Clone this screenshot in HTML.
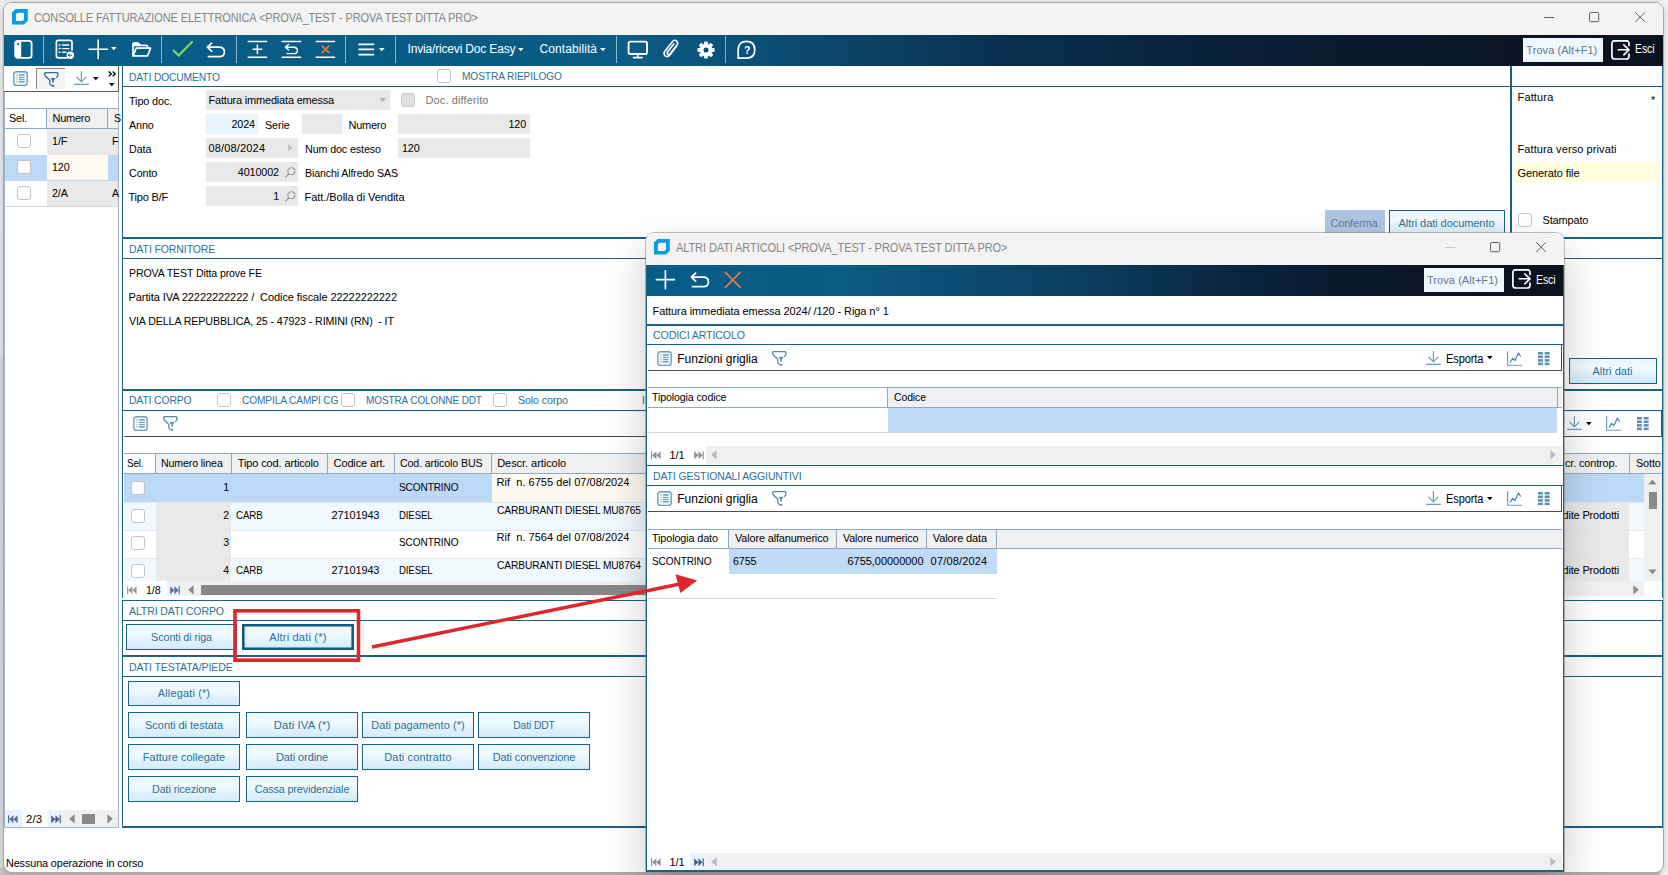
<!DOCTYPE html>
<html lang="it"><head><meta charset="utf-8"><title>Consolle fatturazione elettronica</title>
<style>
html,body{margin:0;padding:0;}
body{width:1668px;height:875px;overflow:hidden;background:#e4e4e4;font-family:'Liberation Sans', sans-serif;}
#root{position:relative;width:1668px;height:875px;overflow:hidden;}
#root div,#root span,#root svg{position:absolute;box-sizing:border-box;}
#root span{white-space:pre;}
</style></head><body><div id="root">
<div style="left:0px;top:0px;width:1668px;height:875px;background:#e9e9e9;"></div>
<div style="left:0px;top:0px;width:5px;height:875px;background:linear-gradient(180deg,#ececec 0,#e8e8e8 40%,#d9d9d9 41%,#dadada 100%);"></div>
<div style="left:0px;top:868px;width:1668px;height:7px;background:#c6c6c6;"></div>
<div style="left:1660px;top:0px;width:8px;height:875px;background:#f2f2f2;"></div>
<div style="left:4px;top:2.5px;width:1659px;height:869.5px;background:#fff;border-radius:8px;box-shadow:0 0 0 1px #a8a8a8,0 2px 6px rgba(0,0,0,.25);overflow:hidden;"></div>
<div style="left:4px;top:2.5px;width:1659px;height:33px;background:#f3f3f3;border-radius:8px 8px 0 0;"></div>
<svg style="left:11.1px;top:8.2px;" width="18" height="18" viewBox="0 0 18 18"><path d="M4.6 1H16.8V12.7L13 16.6H1V4.4Z" fill="#dffbff" stroke="#dffbff" stroke-width="1.6" stroke-linejoin="round"/><path d="M4.6 1H16.8V12.7L13 16.6H1V4.4Z" fill="#0c9ae0"/><path d="M7.4 4.7H13V10.4Q13 12.9 10.5 12.9H4.9V7.2Q4.9 4.7 7.4 4.7Z" fill="#f1f5f7"/></svg>
<span style="left:34px;top:9.50px;font-size:12.4px;line-height:16.4px;letter-spacing:-0.120px;color:#858585;transform:scaleX(0.8885);transform-origin:left center;">CONSOLLE FATTURAZIONE ELETTRONICA &lt;PROVA_TEST - PROVA TEST DITTA PRO&gt;</span>
<svg style="left:1544px;top:12.2px;" width="11" height="11" viewBox="0 0 11 11"><path d="M0 5.5H10.2" stroke="#555" stroke-width="0.95" fill="none"/></svg>
<svg style="left:1589px;top:12.2px;" width="11" height="11" viewBox="0 0 11 11"><rect x="0.5" y="0.5" width="9.2" height="9.2" rx="1.2" stroke="#555" stroke-width="0.95" fill="none"/></svg>
<svg style="left:1635px;top:12.2px;" width="11" height="11" viewBox="0 0 11 11"><path d="M0.3 0.3L10 10M10 0.3L0.3 10" stroke="#555" stroke-width="0.95" fill="none"/></svg>
<div style="left:4px;top:35.3px;width:1659px;height:30.7px;background:linear-gradient(90deg,#085d88 0%,#0a5b85 38%,#0b4a70 48%,#0a3252 59%,#08233d 71%,#0a1a2e 82%,#0b1222 94%,#0c1120 100%);"></div>
<div style="left:43px;top:36px;width:1px;height:27px;background:rgba(255,255,255,.55);"></div>
<div style="left:161px;top:36px;width:1px;height:27px;background:rgba(255,255,255,.55);"></div>
<div style="left:236px;top:36px;width:1px;height:27px;background:rgba(255,255,255,.55);"></div>
<div style="left:345px;top:36px;width:1px;height:27px;background:rgba(255,255,255,.55);"></div>
<div style="left:395px;top:36px;width:1px;height:27px;background:rgba(255,255,255,.55);"></div>
<div style="left:616px;top:36px;width:1px;height:27px;background:rgba(255,255,255,.55);"></div>
<div style="left:725px;top:36px;width:1px;height:27px;background:rgba(255,255,255,.55);"></div>
<svg style="left:14px;top:39px;" width="19" height="21" viewBox="0 0 19 21"><rect x="1.2" y="1.8" width="16.4" height="17" rx="2.6" stroke="#fff" fill="none" stroke-linecap="round" stroke-linejoin="round" stroke-width="1.8"/><path d="M2 3.4Q2 2.4 3 2.4H7.2V18.2H3Q2 18.2 2 17.2Z" fill="#fff"/><circle cx="4.2" cy="5.1" r="1.1" fill="#0a4f76"/></svg>
<svg style="left:55px;top:39px;" width="20" height="21" viewBox="0 0 20 21"><path d="M12 18.8H3.4Q1.4 18.8 1.4 16.8V3.4Q1.4 1.4 3.4 1.4H15Q17 1.4 17 3.4V11" stroke="#fff" fill="none" stroke-linecap="round" stroke-linejoin="round" stroke-width="1.7"/><path d="M7.5 6H13.8M7.5 9.6H13.8M7.5 13.2H11" stroke="#fff" fill="none" stroke-linecap="round" stroke-linejoin="round" stroke-width="1.4"/><path d="M4.3 6H5M4.3 9.6H5M4.3 13.2H5" stroke="#fff" fill="none" stroke-linecap="round" stroke-linejoin="round" stroke-width="1.5"/><circle cx="15.3" cy="16.2" r="3.7" fill="#fff"/><path d="M13.2 16.2H17.2M14.8 14.6L13.2 16.2L14.8 17.8" stroke="#0d5a83" stroke-width="1" fill="none"/></svg>
<svg style="left:88px;top:39px;" width="20" height="21" viewBox="0 0 20 21"><path d="M10.2 1V19.4M1 10.2H19.4" stroke="#fff" fill="none" stroke-linecap="round" stroke-linejoin="round" stroke-width="1.6" stroke-linecap="butt"/></svg>
<svg style="left:110.7px;top:47.3px;" width="6.6" height="5" viewBox="0 0 6.6 5"><path d="M0 0H5.6L2.8 3.1999999999999997Z" fill="#fff"/></svg>
<svg style="left:131px;top:42px;" width="21" height="16" viewBox="0 0 21 16"><path d="M2 3.4V2.4Q2 1.2 3.2 1.2H7L9.2 3.4Z" fill="#fff" stroke="#fff" stroke-width="1.6" stroke-linejoin="round"/><path d="M2 13.6V2.4Q2 1.2 3.2 1.2H7L9.2 3.4H15.4Q16.6 3.4 16.6 4.6V6.2" stroke="#fff" fill="none" stroke-linecap="round" stroke-linejoin="round" stroke-width="1.7"/><path d="M2 13.8L5.2 6.2H19.6L16.6 13.8Z" stroke="#fff" fill="none" stroke-linecap="round" stroke-linejoin="round" stroke-width="1.7"/></svg>
<svg style="left:172px;top:40px;" width="22" height="18" viewBox="0 0 22 18"><path d="M1.6 10.4L6.6 15.6L20 2" stroke="#7ed957" stroke-width="2.2" fill="none" stroke-linecap="round" stroke-linejoin="round"/></svg>
<svg style="left:206px;top:42px;" width="20" height="16" viewBox="0 0 20 16"><path d="M5.6 1.2L1.4 5.2L5.6 9.2M1.8 5.2H13.2Q18.4 5.2 18.4 9.9Q18.4 14.6 13.2 14.6H2.4" stroke="#fff" stroke-width="1.7" fill="none" stroke-linecap="round" stroke-linejoin="round"/></svg>
<svg style="left:247px;top:40px;" width="21" height="19" viewBox="0 0 21 19"><path d="M1.2 1.6H19.6M1.2 17.2H19.6" stroke="#fff" fill="none" stroke-linecap="round" stroke-linejoin="round" stroke-width="1.5"/><path d="M10.4 5V13.6M6.1 9.3H14.7" stroke="#fff" fill="none" stroke-linecap="round" stroke-linejoin="round" stroke-width="1.5"/></svg>
<svg style="left:281px;top:40px;" width="21" height="19" viewBox="0 0 21 19"><path d="M1.2 1.6H19.6M1.2 17.2H19.6" stroke="#fff" fill="none" stroke-linecap="round" stroke-linejoin="round" stroke-width="1.5"/><path d="M7.6 4.4L4.4 7.2L7.6 10M4.8 7.2H12.6Q16.4 7.2 16.4 10.4Q16.4 13.6 12.6 13.6H6" stroke="#fff" fill="none" stroke-linecap="round" stroke-linejoin="round" stroke-width="1.4"/></svg>
<svg style="left:315px;top:40px;" width="21" height="19" viewBox="0 0 21 19"><path d="M1.2 1.6H19.6M1.2 17.2H19.6" stroke="#fff" fill="none" stroke-linecap="round" stroke-linejoin="round" stroke-width="1.5"/><path d="M7.2 6L13.8 12.6M13.8 6L7.2 12.6" stroke="#ec7a33" stroke-width="1.7" fill="none" stroke-linecap="round"/></svg>
<svg style="left:358px;top:42px;" width="17" height="15" viewBox="0 0 17 15"><path d="M1 2.4H15.6M1 7.4H15.6M1 12.6H15.6" stroke="#fff" fill="none" stroke-linecap="round" stroke-linejoin="round" stroke-width="1.6"/></svg>
<svg style="left:378.7px;top:47.8px;" width="6.6" height="5" viewBox="0 0 6.6 5"><path d="M0 0H5.6L2.8 3.1999999999999997Z" fill="#fff"/></svg>
<span style="left:407.5px;top:41.00px;font-size:12px;line-height:16px;letter-spacing:-0.169px;color:#fff;">Invia/ricevi Doc Easy</span>
<svg style="left:517.7px;top:48.3px;" width="6.6" height="5" viewBox="0 0 6.6 5"><path d="M0 0H5.6L2.8 3.1999999999999997Z" fill="#fff"/></svg>
<span style="left:539.5px;top:41.00px;font-size:12px;line-height:16px;letter-spacing:0.080px;color:#fff;">Contabilità</span>
<svg style="left:599.7px;top:48.3px;" width="6.6" height="5" viewBox="0 0 6.6 5"><path d="M0 0H5.6L2.8 3.1999999999999997Z" fill="#fff"/></svg>
<svg style="left:627px;top:40px;" width="22" height="19" viewBox="0 0 22 19"><rect x="1.6" y="1.6" width="18.4" height="12.4" rx="1.6" stroke="#fff" fill="none" stroke-linecap="round" stroke-linejoin="round" stroke-width="1.9"/><path d="M10.8 14.4V17M6.4 17.6H15.2" stroke="#fff" fill="none" stroke-linecap="round" stroke-linejoin="round" stroke-width="1.6"/></svg>
<svg style="left:661px;top:38px;" width="20" height="22" viewBox="0 0 20 22"><path d="M15.6 8.2L8.6 17.2Q6.6 19.6 4.2 17.8Q2 15.8 3.8 13.2L11.6 3.4Q13.4 1.4 15.6 3Q17.6 4.8 16 7L8.8 16Q7.8 17.2 6.6 16.2Q5.6 15.2 6.6 13.8L12.8 6" stroke="#fff" fill="none" stroke-linecap="round" stroke-linejoin="round" stroke-width="1.6"/></svg>
<svg style="left:696.5px;top:40.5px;" width="18" height="18" viewBox="0 0 18 18"><g transform="translate(9 9)"><rect x="-1.9" y="-8.6" width="3.8" height="4" rx="0.8" fill="#fff" transform="rotate(0)"/><rect x="-1.9" y="-8.6" width="3.8" height="4" rx="0.8" fill="#fff" transform="rotate(45)"/><rect x="-1.9" y="-8.6" width="3.8" height="4" rx="0.8" fill="#fff" transform="rotate(90)"/><rect x="-1.9" y="-8.6" width="3.8" height="4" rx="0.8" fill="#fff" transform="rotate(135)"/><rect x="-1.9" y="-8.6" width="3.8" height="4" rx="0.8" fill="#fff" transform="rotate(180)"/><rect x="-1.9" y="-8.6" width="3.8" height="4" rx="0.8" fill="#fff" transform="rotate(225)"/><rect x="-1.9" y="-8.6" width="3.8" height="4" rx="0.8" fill="#fff" transform="rotate(270)"/><rect x="-1.9" y="-8.6" width="3.8" height="4" rx="0.8" fill="#fff" transform="rotate(315)"/><circle r="6.3" fill="#fff"/><circle r="2.5" fill="#0b4c72"/></g></svg>
<svg style="left:736px;top:40px;" width="21" height="20" viewBox="0 0 21 20"><path d="M10.4 1.4Q18.8 1.4 18.8 9.8Q18.8 18.2 10.4 18.2H2.2V9.8Q2.2 1.4 10.4 1.4Z" stroke="#fff" fill="none" stroke-linecap="round" stroke-linejoin="round" stroke-width="1.7"/></svg>
<span style="left:743.5px;top:42.50px;font-size:11px;line-height:15px;letter-spacing:-0.120px;color:#fff;transform:scaleX(0.9650);transform-origin:left center;font-weight:bold;">?</span>
<div style="left:1523px;top:38px;width:80px;height:24px;background:#eef6fe;"></div>
<span style="left:1526.3px;top:42.80px;font-size:11px;line-height:15px;letter-spacing:0.061px;color:#6b7785;">Trova (Alt+F1)</span>
<svg style="left:1611px;top:39.8px;" width="20" height="20" viewBox="0 0 20 20"><path d="M18 5.4V3.6Q18 0.8 15.2 0.8H3.7Q0.9 0.8 0.9 3.6V16.2Q0.9 19 3.7 19H15.2Q18 19 18 16.2V14.2" stroke="#fff" fill="none" stroke-linecap="round" stroke-linejoin="round" stroke-width="1.7"/><path d="M7.2 9.8H17.8M12.8 4.8L18 9.8L12.8 14.8" stroke="#fff" fill="none" stroke-linecap="round" stroke-linejoin="round" stroke-width="1.6"/></svg>
<span style="left:1634.5px;top:41.00px;font-size:12px;line-height:16px;letter-spacing:-0.120px;color:#fff;transform:scaleX(0.8740);transform-origin:left center;">Esci</span>
<div style="left:4px;top:66px;width:115px;height:762px;background:#fff;border:1px solid #a3b5cc;border-top:none;"></div>
<div style="left:4px;top:66px;width:115px;height:26px;background:#fff;border-bottom:1px solid #5a5a5a;border-right:1px solid #5a5a5a;"></div>
<svg style="left:13px;top:71px;" width="15" height="16" viewBox="0 0 15 16"><rect x="0.8" y="0.7" width="13.4" height="13.7" rx="2.7" stroke="#6f9bb5" stroke-width="1.35" fill="#f6fbfe"/><path d="M3.2 4.0H4.8" stroke="#a8c5d7" stroke-width="1.5" fill="none"/><path d="M6 4.0H11.7" stroke="#6f9cb7" stroke-width="1.5" fill="none"/><path d="M3.2 6.5H4.8" stroke="#a8c5d7" stroke-width="1.1" fill="none"/><path d="M6 6.5H11.7" stroke="#6f9cb7" stroke-width="1.1" fill="none"/><path d="M3.2 8.6H4.8" stroke="#a8c5d7" stroke-width="1.1" fill="none"/><path d="M6 8.6H11.7" stroke="#6f9cb7" stroke-width="1.1" fill="none"/><path d="M3.2 10.8H4.8" stroke="#a8c5d7" stroke-width="1.5" fill="none"/><path d="M6 10.8H11.7" stroke="#6f9cb7" stroke-width="1.5" fill="none"/></svg>
<div style="left:36px;top:68px;width:29px;height:21px;background:#f4f4f4;border-top:1px solid #8a8a8a;border-left:1px solid #8a8a8a;"></div>
<svg style="left:44.4px;top:71.9px;" width="16" height="16" viewBox="0 0 16 16"><path d="M12.3 5.5Q14 4.5 14 2.7V1.9Q14 0.6 12.7 0.6H2Q0.7 0.6 0.7 1.9V2.7Q0.7 3.6 1.5 4.3L5.8 8.3V11.6Q5.8 12.3 6.4 12.7L9.4 14.4V13.3" stroke="#2f6e91" stroke-width="1.3" fill="none" stroke-linejoin="round" stroke-linecap="round"/><path d="M7 6.8H11.1M9.05 6.8V10.6" stroke="#2f6e91" stroke-width="1.6" fill="none"/></svg>
<svg style="left:74px;top:71.3px;" width="16" height="15" viewBox="0 0 16 15"><path d="M7.4 0.6V10.6M2.8 6.2L7.4 10.8L12 6.2" stroke="#6f9dba" stroke-width="1.2" fill="none" stroke-linecap="round" stroke-linejoin="round"/><path d="M0.2 13.4H14.8" stroke="#6f9dba" stroke-width="1.3" fill="none"/></svg>
<svg style="left:92.7px;top:76.8px;" width="6.6" height="5" viewBox="0 0 6.6 5"><path d="M0 0H5.6L2.8 3.1999999999999997Z" fill="#000"/></svg>
<svg style="left:108px;top:70.5px;" width="9" height="6" viewBox="0 0 9 6"><path d="M0.7 0.6L3.3 2.9L0.7 5.2M4.6 0.6L7.2 2.9L4.6 5.2" stroke="#000" stroke-width="1.3" fill="none"/></svg>
<svg style="left:108.7px;top:82.8px;" width="6.6" height="5" viewBox="0 0 6.6 5"><path d="M0 0H5.6L2.8 3.1999999999999997Z" fill="#000"/></svg>
<div style="left:5px;top:108px;width:113px;height:21px;background:#f0f0f0;border-top:1px solid #8fa9c4;border-bottom:1px solid #8fa9c4;"></div>
<div style="left:5px;top:109px;width:41px;height:19px;background:#fff;"></div>
<div style="left:46px;top:108px;width:1px;height:21px;background:#8fa9c4;"></div>
<div style="left:107px;top:108px;width:1px;height:21px;background:#8fa9c4;"></div>
<span style="left:9px;top:111.00px;font-size:11px;line-height:15px;letter-spacing:-0.120px;color:#000;transform:scaleX(0.9837);transform-origin:left center;">Sel.</span>
<span style="left:52.5px;top:111.00px;font-size:11px;line-height:15px;letter-spacing:-0.274px;color:#000;">Numero</span>
<span style="left:113.5px;top:111.00px;font-size:11px;line-height:15px;letter-spacing:-0.120px;color:#000;transform:scaleX(0.9650);transform-origin:left center;">S</span>
<div style="left:47px;top:129px;width:71px;height:26px;background:#e9e9e9;"></div>
<div style="left:16.5px;top:134.0px;width:14px;height:14px;background:#fff;border:1px solid #c4c4c4;border-radius:3px;"></div>
<span style="left:51.5px;top:134.00px;font-size:11px;line-height:15px;letter-spacing:-0.120px;color:#000;transform:scaleX(0.9798);transform-origin:left center;">1/F</span>
<span style="left:112px;top:134.00px;font-size:11px;line-height:15px;letter-spacing:-0.120px;color:#000;transform:scaleX(0.9650);transform-origin:left center;">F</span>
<div style="left:5px;top:154.5px;width:113px;height:26px;background:#bcd9f7;"></div>
<div style="left:47px;top:154.5px;width:61px;height:25.5px;background:#fffaf0;"></div>
<div style="left:16.5px;top:159.5px;width:14px;height:14px;background:#fff;border:1px solid #c4c4c4;border-radius:3px;"></div>
<span style="left:51.5px;top:159.50px;font-size:11px;line-height:15px;letter-spacing:-0.120px;color:#000;transform:scaleX(0.9778);transform-origin:left center;">120</span>
<div style="left:47px;top:180.5px;width:71px;height:26px;background:#e9e9e9;"></div>
<div style="left:16.5px;top:185.5px;width:14px;height:14px;background:#fff;border:1px solid #c4c4c4;border-radius:3px;"></div>
<span style="left:51.5px;top:185.50px;font-size:11px;line-height:15px;letter-spacing:-0.120px;color:#000;transform:scaleX(0.9792);transform-origin:left center;">2/A</span>
<span style="left:112px;top:185.50px;font-size:11px;line-height:15px;letter-spacing:-0.120px;color:#000;transform:scaleX(0.9650);transform-origin:left center;">A</span>
<div style="left:5px;top:206px;width:113px;height:1px;background:#d9d9d9;"></div>
<div style="left:5px;top:810px;width:17px;height:17px;background:#eaf3fb;"></div>
<div style="left:48px;top:810px;width:15px;height:17px;background:#eaf3fb;"></div>
<div style="left:63px;top:810px;width:55px;height:17px;background:#f0f0f0;"></div>
<svg style="left:8px;top:815px;" width="10" height="9" viewBox="0 0 10 9"><path d="M0.6 0.3V8.3" stroke="#5a6f94" stroke-width="1.2"/><path d="M5.4 0.3V8.3L1.2 4.3ZM9.6 0.3V8.3L5.4 4.3Z" fill="#5a6f94"/></svg>
<span style="left:25.5px;top:811.50px;font-size:11px;line-height:15px;letter-spacing:0.120px;color:#000;transform:scaleX(1.0298);transform-origin:left center;">2/3</span>
<svg style="left:51px;top:815px;" width="10" height="9" viewBox="0 0 10 9"><path d="M9.2 0.3V8.3" stroke="#4a5f86" stroke-width="1.2"/><path d="M4.4 0.3V8.3L8.6 4.3ZM0.2 0.3V8.3L4.4 4.3Z" fill="#4a5f86"/></svg>
<svg style="left:69px;top:814px;" width="6" height="10" viewBox="0 0 6 10"><path d="M5.6 0.2V9.4L0.2 4.8Z" fill="#8a8a8a"/></svg>
<div style="left:82px;top:814px;width:13px;height:10px;background:#8a8a8a;"></div>
<svg style="left:107px;top:814px;" width="6" height="10" viewBox="0 0 6 10"><path d="M0.4 0.2V9.4L5.8 4.8Z" fill="#8a8a8a"/></svg>
<div style="left:122px;top:66px;width:1.4px;height:762px;background:#1d6183;"></div>
<div style="left:1661.6px;top:66px;width:1.2px;height:762px;background:#1d6183;"></div>
<span style="left:128.5px;top:69.70px;font-size:11px;line-height:15px;letter-spacing:-0.120px;color:#2d7097;transform:scaleX(0.9318);transform-origin:left center;">DATI DOCUMENTO</span>
<div style="left:122px;top:85.7px;width:1541px;height:1px;background:#1d6183;"></div>
<div style="left:437.0px;top:69.0px;width:14px;height:14px;background:#fff;border:1px solid #c4c4c4;border-radius:3px;"></div>
<span style="left:461.5px;top:68.50px;font-size:11px;line-height:15px;letter-spacing:-0.120px;color:#2d7097;transform:scaleX(0.9239);transform-origin:left center;">MOSTRA RIEPILOGO</span>
<div style="left:1510px;top:66px;width:2px;height:172px;background:#1d6183;"></div>
<span style="left:128.5px;top:93.70px;font-size:11px;line-height:15px;letter-spacing:-0.120px;color:#000;transform:scaleX(0.9861);transform-origin:left center;">Tipo doc.</span>
<span style="left:128.5px;top:117.50px;font-size:11px;line-height:15px;letter-spacing:-0.120px;color:#000;transform:scaleX(0.9787);transform-origin:left center;">Anno</span>
<span style="left:128.5px;top:141.50px;font-size:11px;line-height:15px;letter-spacing:-0.120px;color:#000;transform:scaleX(0.9802);transform-origin:left center;">Data</span>
<span style="left:128.5px;top:165.50px;font-size:11px;line-height:15px;letter-spacing:-0.120px;color:#000;transform:scaleX(0.9810);transform-origin:left center;">Conto</span>
<span style="left:128.5px;top:189.50px;font-size:11px;line-height:15px;letter-spacing:-0.206px;color:#000;">Tipo B/F</span>
<div style="left:206px;top:90px;width:184px;height:20px;background:#e8e8e8;"></div>
<span style="left:208.5px;top:92.70px;font-size:11px;line-height:15px;letter-spacing:-0.196px;color:#000;">Fattura immediata emessa</span>
<svg style="left:378.7px;top:97.8px;" width="8" height="5" viewBox="0 0 8 5"><path d="M0 0H7L3.5 3.9Z" fill="#b9b9b9"/></svg>
<div style="left:401.0px;top:93.0px;width:14px;height:14px;background:#e1e1e1;border:1px solid #c6c6c6;border-radius:3px;"></div>
<span style="left:425.5px;top:92.50px;font-size:11px;line-height:15px;letter-spacing:0.111px;color:#777;">Doc. differito</span>
<div style="left:206px;top:114px;width:52px;height:20px;background:#e9f3fb;"></div>
<span style="right:1412.62px;top:116.50px;font-size:11px;line-height:15px;letter-spacing:-0.120px;color:#000;transform:scaleX(0.9794);transform-origin:right center;">2024</span>
<span style="left:264.5px;top:117.50px;font-size:11px;line-height:15px;letter-spacing:-0.120px;color:#000;transform:scaleX(0.9834);transform-origin:left center;">Serie</span>
<div style="left:302px;top:114px;width:40px;height:20px;background:#e8e8e8;"></div>
<span style="left:348.5px;top:117.50px;font-size:11px;line-height:15px;letter-spacing:-0.274px;color:#000;">Numero</span>
<div style="left:398px;top:114px;width:132px;height:20px;background:#e8e8e8;"></div>
<span style="right:1141.62px;top:116.50px;font-size:11px;line-height:15px;letter-spacing:-0.120px;color:#000;transform:scaleX(0.9778);transform-origin:right center;">120</span>
<div style="left:206px;top:138px;width:92px;height:20px;background:#e8e8e8;"></div>
<span style="left:208.5px;top:140.50px;font-size:11px;line-height:15px;letter-spacing:0.160px;color:#000;">08/08/2024</span>
<svg style="left:288px;top:144px;" width="5" height="8" viewBox="0 0 5 8"><path d="M0.3 0.3V7.3L4.3 3.8Z" fill="#b9b9b9"/></svg>
<span style="left:304.5px;top:141.50px;font-size:11px;line-height:15px;letter-spacing:-0.120px;color:#000;transform:scaleX(0.9753);transform-origin:left center;">Num doc esteso</span>
<div style="left:398px;top:138px;width:132px;height:20px;background:#e8e8e8;"></div>
<span style="left:402px;top:140.50px;font-size:11px;line-height:15px;letter-spacing:-0.120px;color:#000;transform:scaleX(0.9778);transform-origin:left center;">120</span>
<div style="left:206px;top:162px;width:92px;height:20px;background:#e8e8e8;"></div>
<span style="right:1389.12px;top:164.50px;font-size:11px;line-height:15px;letter-spacing:-0.120px;color:#000;transform:scaleX(0.9815);transform-origin:right center;">4010002</span>
<svg style="left:285px;top:166.5px;" width="11" height="11" viewBox="0 0 11 11"><circle cx="6.4" cy="4.2" r="3.5" stroke="#9a9a9a" stroke-width="1.1" fill="none"/><path d="M3.9 6.8L0.6 10.2" stroke="#9a9a9a" stroke-width="1.3"/></svg>
<span style="left:304.5px;top:165.50px;font-size:11px;line-height:15px;letter-spacing:-0.120px;color:#000;transform:scaleX(0.9658);transform-origin:left center;">Bianchi Alfredo SAS</span>
<div style="left:206px;top:186px;width:92px;height:20px;background:#e8e8e8;"></div>
<span style="right:1389.12px;top:188.50px;font-size:11px;line-height:15px;letter-spacing:-0.120px;color:#000;transform:scaleX(0.9650);transform-origin:right center;">1</span>
<svg style="left:285px;top:190.5px;" width="11" height="11" viewBox="0 0 11 11"><circle cx="6.4" cy="4.2" r="3.5" stroke="#9a9a9a" stroke-width="1.1" fill="none"/><path d="M3.9 6.8L0.6 10.2" stroke="#9a9a9a" stroke-width="1.3"/></svg>
<span style="left:304.5px;top:189.50px;font-size:11px;line-height:15px;letter-spacing:-0.043px;color:#000;">Fatt./Bolla di Vendita</span>
<span style="left:1517.5px;top:89.50px;font-size:11px;line-height:15px;letter-spacing:0.157px;color:#000;">Fattura</span>
<span style="left:1650.5px;top:92.70px;font-size:11px;line-height:15px;letter-spacing:-0.120px;color:#000;transform:scaleX(0.9650);transform-origin:left center;">*</span>
<span style="left:1517.5px;top:141.50px;font-size:11px;line-height:15px;letter-spacing:0.090px;color:#000;">Fattura verso privati</span>
<div style="left:1515px;top:162px;width:144px;height:20px;background:#ffffdf;"></div>
<span style="left:1517.5px;top:165.80px;font-size:11px;line-height:15px;letter-spacing:-0.082px;color:#000;">Generato file</span>
<div style="left:1518.0px;top:212.5px;width:14px;height:14px;background:#fff;border:1px solid #c4c4c4;border-radius:3px;"></div>
<span style="left:1542.5px;top:212.50px;font-size:11px;line-height:15px;letter-spacing:-0.156px;color:#000;">Stampato</span>
<div style="left:1325px;top:210px;width:60px;height:28px;background:#afc6e3;"></div>
<span style="left:1330.5px;top:215.50px;font-size:11px;line-height:15px;letter-spacing:-0.185px;color:#5f7f9f;">Conferma</span>
<div style="left:1389px;top:210px;width:116px;height:28px;background:linear-gradient(180deg,#eaf6fe 0,#f1faff 35%,#dcf0fc 75%,#d2ebfa 100%);border:1px solid #1d6183;"></div>
<span style="left:1398.5px;top:215.50px;font-size:11px;line-height:15px;letter-spacing:-0.064px;color:#2d7097;">Altri dati documento</span>
<div style="left:122px;top:237px;width:1541px;height:2px;background:#1d6183;"></div>
<span style="left:128.5px;top:242.00px;font-size:11px;line-height:15px;letter-spacing:-0.120px;color:#2d7097;transform:scaleX(0.9555);transform-origin:left center;">DATI FORNITORE</span>
<div style="left:122px;top:258.2px;width:1541px;height:1px;background:#1d6183;"></div>
<span style="left:128.5px;top:266.00px;font-size:11px;line-height:15px;letter-spacing:-0.120px;color:#000;transform:scaleX(0.9614);transform-origin:left center;">PROVA TEST Ditta prove FE</span>
<span style="left:128.5px;top:289.50px;font-size:11px;line-height:15px;letter-spacing:-0.078px;color:#000;">Partita IVA 22222222222 /  Codice fiscale 22222222222</span>
<span style="left:128.5px;top:313.50px;font-size:11px;line-height:15px;letter-spacing:-0.120px;color:#000;transform:scaleX(0.9720);transform-origin:left center;">VIA DELLA REPUBBLICA, 25 - 47923 - RIMINI (RN)  - IT</span>
<div style="left:1569px;top:358px;width:88px;height:25.6px;background:linear-gradient(180deg,#eaf6fe 0,#f1faff 35%,#dcf0fc 75%,#d2ebfa 100%);border:1px solid #1d6183;"></div>
<span style="left:1592.5px;top:363.50px;font-size:11px;line-height:15px;letter-spacing:0.028px;color:#2d7097;">Altri dati</span>
<div style="left:122px;top:389px;width:1541px;height:2px;background:#1d6183;"></div>
<span style="left:128.5px;top:393.30px;font-size:11px;line-height:15px;letter-spacing:-0.120px;color:#2d7097;transform:scaleX(0.9405);transform-origin:left center;">DATI CORPO</span>
<div style="left:122px;top:410px;width:1541px;height:1px;background:#1d6183;"></div>
<div style="left:124px;top:411px;width:1538px;height:1px;background:#e6fbff;"></div>
<div style="left:217.0px;top:393.0px;width:14px;height:14px;background:#fff;border:1px solid #c4c4c4;border-radius:3px;"></div>
<span style="left:241.5px;top:393.00px;font-size:11px;line-height:15px;letter-spacing:-0.120px;color:#2d7097;transform:scaleX(0.9229);transform-origin:left center;">COMPILA CAMPI CG</span>
<div style="left:341.0px;top:393.0px;width:14px;height:14px;background:#fff;border:1px solid #c4c4c4;border-radius:3px;"></div>
<span style="left:365.5px;top:393.00px;font-size:11px;line-height:15px;letter-spacing:-0.120px;color:#2d7097;transform:scaleX(0.9095);transform-origin:left center;">MOSTRA COLONNE DDT</span>
<div style="left:493.0px;top:393.0px;width:14px;height:14px;background:#fff;border:1px solid #c4c4c4;border-radius:3px;"></div>
<span style="left:517.5px;top:393.00px;font-size:11px;line-height:15px;letter-spacing:-0.120px;color:#2d7097;transform:scaleX(0.9706);transform-origin:left center;">Solo corpo</span>
<span style="left:642px;top:393.00px;font-size:11px;line-height:15px;letter-spacing:-0.107px;color:#2d7097;transform:scaleX(0.9650);transform-origin:left center;">I</span>
<div style="left:124px;top:411px;width:1538px;height:26px;border-bottom:1px solid #4d4d4d;border-right:1px solid #4d4d4d;"></div>
<svg style="left:133px;top:416px;" width="15" height="16" viewBox="0 0 15 16"><rect x="0.8" y="0.7" width="13.4" height="13.7" rx="2.7" stroke="#6f9bb5" stroke-width="1.35" fill="#f6fbfe"/><path d="M3.2 4.0H4.8" stroke="#a8c5d7" stroke-width="1.5" fill="none"/><path d="M6 4.0H11.7" stroke="#6f9cb7" stroke-width="1.5" fill="none"/><path d="M3.2 6.5H4.8" stroke="#a8c5d7" stroke-width="1.1" fill="none"/><path d="M6 6.5H11.7" stroke="#6f9cb7" stroke-width="1.1" fill="none"/><path d="M3.2 8.6H4.8" stroke="#a8c5d7" stroke-width="1.1" fill="none"/><path d="M6 8.6H11.7" stroke="#6f9cb7" stroke-width="1.1" fill="none"/><path d="M3.2 10.8H4.8" stroke="#a8c5d7" stroke-width="1.5" fill="none"/><path d="M6 10.8H11.7" stroke="#6f9cb7" stroke-width="1.5" fill="none"/></svg>
<svg style="left:163px;top:416px;" width="16" height="16" viewBox="0 0 16 16"><path d="M12.3 5.5Q14 4.5 14 2.7V1.9Q14 0.6 12.7 0.6H2Q0.7 0.6 0.7 1.9V2.7Q0.7 3.6 1.5 4.3L5.8 8.3V11.6Q5.8 12.3 6.4 12.7L9.4 14.4V13.3" stroke="#5a88a4" stroke-width="1.3" fill="none" stroke-linejoin="round" stroke-linecap="round"/><path d="M7 6.8H11.1M9.05 6.8V10.6" stroke="#5a88a4" stroke-width="1.6" fill="none"/></svg>
<svg style="left:1567px;top:416px;" width="16" height="15" viewBox="0 0 16 15"><path d="M7.4 0.6V10.6M2.8 6.2L7.4 10.8L12 6.2" stroke="#6f9dba" stroke-width="1.2" fill="none" stroke-linecap="round" stroke-linejoin="round"/><path d="M0.2 13.4H14.8" stroke="#6f9dba" stroke-width="1.3" fill="none"/></svg>
<svg style="left:1585.7px;top:421.8px;" width="6.6" height="5" viewBox="0 0 6.6 5"><path d="M0 0H5.6L2.8 3.1999999999999997Z" fill="#000"/></svg>
<svg style="left:1606px;top:416px;" width="16" height="16" viewBox="0 0 16 16"><path d="M0.6 0.2V14.2H15" stroke="#6f9dba" stroke-width="1.15" fill="none"/><path d="M3.2 11.2L5.6 7.2L8 9.6L11.4 2L13.4 5.2" stroke="#4f86a6" stroke-width="1.25" fill="none" stroke-linejoin="round" stroke-linecap="round"/></svg>
<svg style="left:1637px;top:417px;" width="12" height="14" viewBox="0 0 12 14"><rect x="0.0" y="0.0" width="4.9" height="2.5" fill="#5b8fad"/><rect x="6.7" y="0.0" width="4.9" height="2.5" fill="#5b8fad"/><rect x="0.0" y="3.55" width="4.9" height="2.5" fill="#5b8fad"/><rect x="6.7" y="3.55" width="4.9" height="2.5" fill="#5b8fad"/><rect x="0.0" y="7.1" width="4.9" height="2.5" fill="#5b8fad"/><rect x="6.7" y="7.1" width="4.9" height="2.5" fill="#5b8fad"/><rect x="0.0" y="10.649999999999999" width="4.9" height="2.5" fill="#5b8fad"/><rect x="6.7" y="10.649999999999999" width="4.9" height="2.5" fill="#5b8fad"/></svg>
<div style="left:124px;top:453px;width:1538px;height:21px;background:#f0f0f0;border-top:1px solid #8fa9c4;border-bottom:1px solid #8fa9c4;"></div>
<div style="left:124px;top:454px;width:31px;height:19px;background:#fff;"></div>
<div style="left:155px;top:453px;width:1px;height:21px;background:#8fa9c4;"></div>
<div style="left:231px;top:453px;width:1px;height:21px;background:#8fa9c4;"></div>
<div style="left:327px;top:453px;width:1px;height:21px;background:#8fa9c4;"></div>
<div style="left:394px;top:453px;width:1px;height:21px;background:#8fa9c4;"></div>
<div style="left:491px;top:453px;width:1px;height:21px;background:#8fa9c4;"></div>
<div style="left:1629px;top:453px;width:1px;height:21px;background:#8fa9c4;"></div>
<span style="left:127.4px;top:456.00px;font-size:11px;line-height:15px;letter-spacing:-0.120px;color:#000;transform:scaleX(0.8921);transform-origin:left center;">Sel.</span>
<span style="left:161px;top:456.00px;font-size:11px;line-height:15px;letter-spacing:-0.120px;color:#000;transform:scaleX(0.9641);transform-origin:left center;">Numero linea</span>
<span style="left:237.8px;top:456.00px;font-size:11px;line-height:15px;letter-spacing:-0.127px;color:#000;">Tipo cod. articolo</span>
<span style="left:333.6px;top:456.00px;font-size:11px;line-height:15px;letter-spacing:-0.140px;color:#000;">Codice art.</span>
<span style="left:400.4px;top:456.00px;font-size:11px;line-height:15px;letter-spacing:-0.120px;color:#000;transform:scaleX(0.9659);transform-origin:left center;">Cod. articolo BUS</span>
<span style="left:497.2px;top:456.00px;font-size:11px;line-height:15px;letter-spacing:-0.050px;color:#000;">Descr. articolo</span>
<span style="left:1635.5px;top:456.00px;font-size:11px;line-height:15px;letter-spacing:-0.120px;color:#000;transform:scaleX(0.9834);transform-origin:left center;">Sotto</span>
<span style="left:1562px;top:456.00px;font-size:11px;line-height:15px;letter-spacing:-0.120px;color:#000;transform:scaleX(0.9898);transform-origin:left center;"> cr. controp.</span>
<div style="left:124px;top:474px;width:1520px;height:28px;background:#bcd9f7;"></div>
<div style="left:492px;top:474px;width:1071px;height:28px;background:#fef9ef;"></div>
<div style="left:131.0px;top:480.5px;width:14px;height:14px;background:#fff;border:1px solid #c4c4c4;border-radius:3px;"></div>
<span style="right:1439.12px;top:479.90px;font-size:11px;line-height:15px;letter-spacing:-0.120px;color:#000;transform:scaleX(0.9650);transform-origin:right center;">1</span>
<span style="left:398.5px;top:479.80px;font-size:11px;line-height:15px;letter-spacing:-0.120px;color:#000;transform:scaleX(0.9148);transform-origin:left center;">SCONTRINO</span>
<span style="left:496.5px;top:474.70px;font-size:11px;line-height:15px;letter-spacing:0.034px;color:#000;">Rif  n. 6755 del 07/08/2024</span>
<div style="left:124px;top:502px;width:1520px;height:27.5px;background:#f1f8fe;"></div>
<div style="left:156px;top:502px;width:75px;height:27.5px;background:#e9e9e9;"></div>
<div style="left:1563px;top:502px;width:66px;height:27.5px;background:#e9e9e9;"></div>
<div style="left:124px;top:502px;width:1520px;height:1px;background:#dfe6ee;"></div>
<div style="left:131.0px;top:508.5px;width:14px;height:14px;background:#fff;border:1px solid #c4c4c4;border-radius:3px;"></div>
<span style="right:1439.12px;top:507.90px;font-size:11px;line-height:15px;letter-spacing:-0.120px;color:#000;transform:scaleX(0.9650);transform-origin:right center;">2</span>
<span style="left:235.5px;top:507.90px;font-size:11px;line-height:15px;letter-spacing:-0.120px;color:#000;transform:scaleX(0.8840);transform-origin:left center;">CARB</span>
<span style="left:331.5px;top:507.90px;font-size:11px;line-height:15px;letter-spacing:-0.136px;color:#000;">27101943</span>
<span style="left:398.5px;top:507.80px;font-size:11px;line-height:15px;letter-spacing:-0.120px;color:#000;transform:scaleX(0.8692);transform-origin:left center;">DIESEL</span>
<span style="left:496.5px;top:502.70px;font-size:11px;line-height:15px;letter-spacing:-0.120px;color:#000;transform:scaleX(0.9281);transform-origin:left center;">CARBURANTI DIESEL MU8765</span>
<span style="left:1562.5px;top:507.90px;font-size:11px;line-height:15px;letter-spacing:-0.171px;color:#000;">dite Prodotti</span>
<div style="left:156px;top:529.5px;width:75px;height:28px;background:#e9e9e9;"></div>
<div style="left:1563px;top:529.5px;width:66px;height:28px;background:#e9e9e9;"></div>
<div style="left:124px;top:529.5px;width:1520px;height:1px;background:#dfe6ee;"></div>
<div style="left:131.0px;top:536.0px;width:14px;height:14px;background:#fff;border:1px solid #c4c4c4;border-radius:3px;"></div>
<span style="right:1439.12px;top:535.40px;font-size:11px;line-height:15px;letter-spacing:-0.120px;color:#000;transform:scaleX(0.9650);transform-origin:right center;">3</span>
<span style="left:398.5px;top:535.30px;font-size:11px;line-height:15px;letter-spacing:-0.120px;color:#000;transform:scaleX(0.9148);transform-origin:left center;">SCONTRINO</span>
<span style="left:496.5px;top:530.20px;font-size:11px;line-height:15px;letter-spacing:0.034px;color:#000;">Rif  n. 7564 del 07/08/2024</span>
<div style="left:124px;top:557.5px;width:1520px;height:24px;background:#f1f8fe;"></div>
<div style="left:156px;top:557.5px;width:75px;height:24px;background:#e9e9e9;"></div>
<div style="left:1563px;top:557.5px;width:66px;height:24px;background:#e9e9e9;"></div>
<div style="left:124px;top:557.5px;width:1520px;height:1px;background:#dfe6ee;"></div>
<div style="left:131.0px;top:564.0px;width:14px;height:14px;background:#fff;border:1px solid #c4c4c4;border-radius:3px;"></div>
<span style="right:1439.12px;top:563.40px;font-size:11px;line-height:15px;letter-spacing:-0.120px;color:#000;transform:scaleX(0.9650);transform-origin:right center;">4</span>
<span style="left:235.5px;top:563.40px;font-size:11px;line-height:15px;letter-spacing:-0.120px;color:#000;transform:scaleX(0.8840);transform-origin:left center;">CARB</span>
<span style="left:331.5px;top:563.40px;font-size:11px;line-height:15px;letter-spacing:-0.136px;color:#000;">27101943</span>
<span style="left:398.5px;top:563.30px;font-size:11px;line-height:15px;letter-spacing:-0.120px;color:#000;transform:scaleX(0.8692);transform-origin:left center;">DIESEL</span>
<span style="left:496.5px;top:558.20px;font-size:11px;line-height:15px;letter-spacing:-0.120px;color:#000;transform:scaleX(0.9281);transform-origin:left center;">CARBURANTI DIESEL MU8764</span>
<span style="left:1562.5px;top:563.40px;font-size:11px;line-height:15px;letter-spacing:-0.171px;color:#000;">dite Prodotti</span>
<div style="left:1644px;top:474px;width:18px;height:107px;background:#f0f0f0;"></div>
<svg style="left:1648px;top:479px;" width="9" height="6" viewBox="0 0 9 6"><path d="M0.2 5.4H8.6L4.4 0.4Z" fill="#8a8a8a"/></svg>
<div style="left:1648.5px;top:491.5px;width:8.5px;height:17px;background:#8a8a8a;"></div>
<svg style="left:1648px;top:569px;" width="9" height="6" viewBox="0 0 9 6"><path d="M0.2 0.4H8.6L4.4 5.4Z" fill="#8a8a8a"/></svg>
<div style="left:124px;top:581px;width:1520px;height:15px;background:#f0f0f0;"></div>
<div style="left:124px;top:581px;width:43px;height:15px;background:#fff;"></div>
<div style="left:167px;top:581px;width:15px;height:15px;background:#eaf3fb;"></div>
<div style="left:1644px;top:581px;width:18px;height:15px;background:#fff;"></div>
<svg style="left:127px;top:585.6px;" width="10" height="9" viewBox="0 0 10 9"><path d="M0.6 0.3V8.3" stroke="#9a9a9a" stroke-width="1.2"/><path d="M5.4 0.3V8.3L1.2 4.3ZM9.6 0.3V8.3L5.4 4.3Z" fill="#9a9a9a"/></svg>
<span style="left:145.8px;top:582.50px;font-size:11px;line-height:15px;letter-spacing:-0.120px;color:#000;transform:scaleX(0.9697);transform-origin:left center;">1/8</span>
<svg style="left:170px;top:585.6px;" width="10" height="9" viewBox="0 0 10 9"><path d="M9.2 0.3V8.3" stroke="#5a6f94" stroke-width="1.2"/><path d="M4.4 0.3V8.3L8.6 4.3ZM0.2 0.3V8.3L4.4 4.3Z" fill="#5a6f94"/></svg>
<svg style="left:188px;top:584.6px;" width="6" height="10" viewBox="0 0 6 10"><path d="M5.6 0.2V9.4L0.2 4.8Z" fill="#8a8a8a"/></svg>
<div style="left:201px;top:585.2px;width:1330px;height:9.6px;background:#878787;"></div>
<svg style="left:1633px;top:584.5px;" width="6" height="10" viewBox="0 0 6 10"><path d="M0.4 0.2V9.4L5.8 4.8Z" fill="#8a8a8a"/></svg>
<div style="left:122px;top:600px;width:1541px;height:1.3px;background:#1d6183;"></div>
<span style="left:128.5px;top:603.80px;font-size:11px;line-height:15px;letter-spacing:-0.120px;color:#2d7097;transform:scaleX(0.9572);transform-origin:left center;">ALTRI DATI CORPO</span>
<div style="left:122px;top:619.9px;width:1541px;height:1px;background:#1d6183;"></div>
<div style="left:122px;top:598.2px;width:1541px;height:1.6px;background:#fff;"></div>
<div style="left:126.2px;top:624.2px;width:111.1px;height:25.6px;background:linear-gradient(180deg,#eaf6fe 0,#f1faff 35%,#dcf0fc 75%,#d2ebfa 100%);border:1px solid #1d6183;"></div>
<span style="left:126.2px;width:111.1px;text-align:center;top:629.80px;font-size:11px;line-height:15px;letter-spacing:-0.120px;color:#2d7097;transform:scaleX(0.9833);transform-origin:center center;">Sconti di riga</span>
<div style="left:242.1px;top:624.1px;width:111.9px;height:25.9px;background:linear-gradient(180deg,#eaf6fe 0,#f1faff 35%,#dcf0fc 75%,#d2ebfa 100%);box-shadow:inset 0 0 0 2.6px #0e5a82;"></div>
<span style="left:242.1px;width:111.9px;text-align:center;top:629.85px;font-size:11px;line-height:15px;letter-spacing:0.120px;color:#2d7097;transform:scaleX(1.0185);transform-origin:center center;">Altri dati (*)</span>
<div style="left:122px;top:655px;width:1541px;height:2px;background:#1d6183;"></div>
<span style="left:128.5px;top:659.90px;font-size:11px;line-height:15px;letter-spacing:-0.120px;color:#2d7097;transform:scaleX(0.9585);transform-origin:left center;">DATI TESTATA/PIEDE</span>
<div style="left:122px;top:676px;width:1541px;height:1px;background:#1d6183;"></div>
<div style="left:128px;top:680.5px;width:112px;height:25px;background:linear-gradient(180deg,#eaf6fe 0,#f1faff 35%,#dcf0fc 75%,#d2ebfa 100%);border:1px solid #1d6183;"></div>
<span style="left:128px;width:112px;text-align:center;top:685.80px;font-size:11px;line-height:15px;letter-spacing:0.132px;color:#2d7097;">Allegati (*)</span>
<div style="left:128px;top:712px;width:112px;height:26px;background:linear-gradient(180deg,#eaf6fe 0,#f1faff 35%,#dcf0fc 75%,#d2ebfa 100%);border:1px solid #1d6183;"></div>
<span style="left:128px;width:112px;text-align:center;top:717.80px;font-size:11px;line-height:15px;letter-spacing:-0.018px;color:#2d7097;">Sconti di testata</span>
<div style="left:246px;top:712px;width:112px;height:26px;background:linear-gradient(180deg,#eaf6fe 0,#f1faff 35%,#dcf0fc 75%,#d2ebfa 100%);border:1px solid #1d6183;"></div>
<span style="left:246px;width:112px;text-align:center;top:717.80px;font-size:11px;line-height:15px;letter-spacing:0.120px;color:#2d7097;transform:scaleX(1.0307);transform-origin:center center;">Dati IVA (*)</span>
<div style="left:362px;top:712px;width:112px;height:26px;background:linear-gradient(180deg,#eaf6fe 0,#f1faff 35%,#dcf0fc 75%,#d2ebfa 100%);border:1px solid #1d6183;"></div>
<span style="left:362px;width:112px;text-align:center;top:717.80px;font-size:11px;line-height:15px;letter-spacing:0.063px;color:#2d7097;">Dati pagamento (*)</span>
<div style="left:478px;top:712px;width:112px;height:26px;background:linear-gradient(180deg,#eaf6fe 0,#f1faff 35%,#dcf0fc 75%,#d2ebfa 100%);border:1px solid #1d6183;"></div>
<span style="left:478px;width:112px;text-align:center;top:717.80px;font-size:11px;line-height:15px;letter-spacing:-0.120px;color:#2d7097;transform:scaleX(0.9371);transform-origin:center center;">Dati DDT</span>
<div style="left:128px;top:744px;width:112px;height:26px;background:linear-gradient(180deg,#eaf6fe 0,#f1faff 35%,#dcf0fc 75%,#d2ebfa 100%);border:1px solid #1d6183;"></div>
<span style="left:128px;width:112px;text-align:center;top:749.80px;font-size:11px;line-height:15px;letter-spacing:0.023px;color:#2d7097;">Fatture collegate</span>
<div style="left:246px;top:744px;width:112px;height:26px;background:linear-gradient(180deg,#eaf6fe 0,#f1faff 35%,#dcf0fc 75%,#d2ebfa 100%);border:1px solid #1d6183;"></div>
<span style="left:246px;width:112px;text-align:center;top:749.80px;font-size:11px;line-height:15px;letter-spacing:-0.100px;color:#2d7097;">Dati ordine</span>
<div style="left:362px;top:744px;width:112px;height:26px;background:linear-gradient(180deg,#eaf6fe 0,#f1faff 35%,#dcf0fc 75%,#d2ebfa 100%);border:1px solid #1d6183;"></div>
<span style="left:362px;width:112px;text-align:center;top:749.80px;font-size:11px;line-height:15px;letter-spacing:0.144px;color:#2d7097;">Dati contratto</span>
<div style="left:478px;top:744px;width:112px;height:26px;background:linear-gradient(180deg,#eaf6fe 0,#f1faff 35%,#dcf0fc 75%,#d2ebfa 100%);border:1px solid #1d6183;"></div>
<span style="left:478px;width:112px;text-align:center;top:749.80px;font-size:11px;line-height:15px;letter-spacing:-0.113px;color:#2d7097;">Dati convenzione</span>
<div style="left:128px;top:776px;width:112px;height:26px;background:linear-gradient(180deg,#eaf6fe 0,#f1faff 35%,#dcf0fc 75%,#d2ebfa 100%);border:1px solid #1d6183;"></div>
<span style="left:128px;width:112px;text-align:center;top:781.80px;font-size:11px;line-height:15px;letter-spacing:-0.120px;color:#2d7097;transform:scaleX(0.9849);transform-origin:center center;">Dati ricezione</span>
<div style="left:246px;top:776px;width:112px;height:26px;background:linear-gradient(180deg,#eaf6fe 0,#f1faff 35%,#dcf0fc 75%,#d2ebfa 100%);border:1px solid #1d6183;"></div>
<span style="left:246px;width:112px;text-align:center;top:781.80px;font-size:11px;line-height:15px;letter-spacing:-0.120px;color:#2d7097;transform:scaleX(0.9762);transform-origin:center center;">Cassa previdenziale</span>
<div style="left:122px;top:826.4px;width:1541px;height:1.4px;background:#1d6183;"></div>
<span style="left:6px;top:855.50px;font-size:11px;line-height:15px;letter-spacing:-0.120px;color:#000;transform:scaleX(0.9852);transform-origin:left center;">Nessuna operazione in corso</span>
<svg style="left:230px;top:606px;" width="134" height="60" viewBox="0 0 134 60"><rect x="5" y="4.8" width="123.5" height="49.4" fill="none" stroke="#de262d" stroke-width="3.6"/></svg>
<div style="left:646px;top:233px;width:918px;height:638px;background:#fff;border-radius:8px 8px 0 0;box-shadow:0 18px 40px 0 rgba(0,0,0,.22),0 0 0 1px rgba(140,140,140,.55);"></div>
<div style="left:646px;top:233px;width:918px;height:32px;background:#f3f3f3;border-radius:8px 8px 0 0;"></div>
<svg style="left:653px;top:237.5px;" width="18" height="18" viewBox="0 0 18 18"><path d="M4.6 1H16.8V12.7L13 16.6H1V4.4Z" fill="#dffbff" stroke="#dffbff" stroke-width="1.6" stroke-linejoin="round"/><path d="M4.6 1H16.8V12.7L13 16.6H1V4.4Z" fill="#0c9ae0"/><path d="M7.4 4.7H13V10.4Q13 12.9 10.5 12.9H4.9V7.2Q4.9 4.7 7.4 4.7Z" fill="#f1f5f7"/></svg>
<span style="left:675.9px;top:239.50px;font-size:12.4px;line-height:16.4px;letter-spacing:-0.120px;color:#858585;transform:scaleX(0.8906);transform-origin:left center;">ALTRI DATI ARTICOLI &lt;PROVA_TEST - PROVA TEST DITTA PRO&gt;</span>
<svg style="left:1445px;top:242px;" width="11" height="11" viewBox="0 0 11 11"><path d="M0 5.5H10.2" stroke="#c8c8c8" stroke-width="0.95" fill="none"/></svg>
<svg style="left:1490.3px;top:242px;" width="11" height="11" viewBox="0 0 11 11"><rect x="0.5" y="0.5" width="9.2" height="9.2" rx="1.2" stroke="#555" stroke-width="0.95" fill="none"/></svg>
<svg style="left:1535.8px;top:242px;" width="11" height="11" viewBox="0 0 11 11"><path d="M0.3 0.3L10 10M10 0.3L0.3 10" stroke="#555" stroke-width="0.95" fill="none"/></svg>
<div style="left:646px;top:265px;width:918px;height:30.5px;background:linear-gradient(90deg,#085d88 0%,#0a5b85 22%,#0b5078 30%,#0a3d60 48%,#092b48 60%,#091d33 72%,#0b1525 84%,#0c1120 100%);"></div>
<svg style="left:655px;top:270px;" width="21" height="20" viewBox="0 0 21 20"><path d="M10.4 0.8V18.6M1.4 9.7H19.4" stroke="#fff" fill="none" stroke-linecap="round" stroke-linejoin="round" stroke-width="1.7" stroke-linecap="butt"/></svg>
<svg style="left:689.5px;top:271.5px;" width="20" height="16" viewBox="0 0 20 16"><path d="M5.6 1.2L1.4 5.2L5.6 9.2M1.8 5.2H13.2Q18.4 5.2 18.4 9.9Q18.4 14.6 13.2 14.6H2.4" stroke="#fff" stroke-width="1.7" fill="none" stroke-linecap="round" stroke-linejoin="round"/></svg>
<svg style="left:724px;top:270.5px;" width="18" height="18" viewBox="0 0 18 18"><path d="M1.4 1.4L16.2 16.4M16.2 1.4L1.4 16.4" stroke="#e8803f" stroke-width="1.5" fill="none" stroke-linecap="round"/></svg>
<div style="left:1424px;top:268px;width:80px;height:24px;background:#eef6fe;"></div>
<span style="left:1427px;top:272.80px;font-size:11px;line-height:15px;letter-spacing:0.061px;color:#6b7785;">Trova (Alt+F1)</span>
<svg style="left:1512px;top:269.4px;" width="20" height="20" viewBox="0 0 20 20"><path d="M18 5.4V3.6Q18 0.8 15.2 0.8H3.7Q0.9 0.8 0.9 3.6V16.2Q0.9 19 3.7 19H15.2Q18 19 18 16.2V14.2" stroke="#fff" fill="none" stroke-linecap="round" stroke-linejoin="round" stroke-width="1.7"/><path d="M7.2 9.8H17.8M12.8 4.8L18 9.8L12.8 14.8" stroke="#fff" fill="none" stroke-linecap="round" stroke-linejoin="round" stroke-width="1.6"/></svg>
<span style="left:1535.5px;top:271.50px;font-size:12px;line-height:16px;letter-spacing:-0.120px;color:#fff;transform:scaleX(0.8740);transform-origin:left center;">Esci</span>
<span style="left:652.5px;top:303.50px;font-size:11px;line-height:15px;letter-spacing:-0.090px;color:#000;">Fattura immediata emessa 2024/ /120 - Riga n° 1</span>
<div style="left:646px;top:265px;width:1px;height:606px;background:#1d6183;"></div>
<div style="left:1563px;top:265px;width:1px;height:606px;background:#1d6183;"></div>
<div style="left:647px;top:324px;width:916px;height:1.5px;background:#1d6183;"></div>
<span style="left:652.5px;top:327.50px;font-size:11px;line-height:15px;letter-spacing:-0.120px;color:#2d7097;transform:scaleX(0.9653);transform-origin:left center;">CODICI ARTICOLO</span>
<div style="left:647px;top:344px;width:916px;height:1.3px;background:#1d6183;"></div>
<div style="left:648px;top:345px;width:914px;height:26px;border-bottom:1px solid #4d4d4d;border-right:1px solid #4d4d4d;"></div>
<svg style="left:657px;top:350.5px;" width="15" height="16" viewBox="0 0 15 16"><rect x="0.8" y="0.7" width="13.4" height="13.7" rx="2.7" stroke="#6f9bb5" stroke-width="1.35" fill="#f6fbfe"/><path d="M3.2 4.0H4.8" stroke="#a8c5d7" stroke-width="1.5" fill="none"/><path d="M6 4.0H11.7" stroke="#6f9cb7" stroke-width="1.5" fill="none"/><path d="M3.2 6.5H4.8" stroke="#a8c5d7" stroke-width="1.1" fill="none"/><path d="M6 6.5H11.7" stroke="#6f9cb7" stroke-width="1.1" fill="none"/><path d="M3.2 8.6H4.8" stroke="#a8c5d7" stroke-width="1.1" fill="none"/><path d="M6 8.6H11.7" stroke="#6f9cb7" stroke-width="1.1" fill="none"/><path d="M3.2 10.8H4.8" stroke="#a8c5d7" stroke-width="1.5" fill="none"/><path d="M6 10.8H11.7" stroke="#6f9cb7" stroke-width="1.5" fill="none"/></svg>
<span style="left:677.3px;top:350.50px;font-size:12px;line-height:16px;letter-spacing:-0.021px;color:#000;">Funzioni griglia</span>
<svg style="left:772px;top:350.5px;" width="16" height="16" viewBox="0 0 16 16"><path d="M12.3 5.5Q14 4.5 14 2.7V1.9Q14 0.6 12.7 0.6H2Q0.7 0.6 0.7 1.9V2.7Q0.7 3.6 1.5 4.3L5.8 8.3V11.6Q5.8 12.3 6.4 12.7L9.4 14.4V13.3" stroke="#5a88a4" stroke-width="1.3" fill="none" stroke-linejoin="round" stroke-linecap="round"/><path d="M7 6.8H11.1M9.05 6.8V10.6" stroke="#5a88a4" stroke-width="1.6" fill="none"/></svg>
<svg style="left:1425.5px;top:350.5px;" width="16" height="15" viewBox="0 0 16 15"><path d="M7.4 0.6V10.6M2.8 6.2L7.4 10.8L12 6.2" stroke="#6f9dba" stroke-width="1.2" fill="none" stroke-linecap="round" stroke-linejoin="round"/><path d="M0.2 13.4H14.8" stroke="#6f9dba" stroke-width="1.3" fill="none"/></svg>
<span style="left:1445.7px;top:350.50px;font-size:12px;line-height:16px;letter-spacing:-0.120px;color:#000;transform:scaleX(0.9178);transform-origin:left center;">Esporta</span>
<svg style="left:1486.7px;top:356.3px;" width="6.6" height="5" viewBox="0 0 6.6 5"><path d="M0 0H5.6L2.8 3.1999999999999997Z" fill="#000"/></svg>
<svg style="left:1507px;top:350.5px;" width="16" height="16" viewBox="0 0 16 16"><path d="M0.6 0.2V14.2H15" stroke="#6f9dba" stroke-width="1.15" fill="none"/><path d="M3.2 11.2L5.6 7.2L8 9.6L11.4 2L13.4 5.2" stroke="#4f86a6" stroke-width="1.25" fill="none" stroke-linejoin="round" stroke-linecap="round"/></svg>
<svg style="left:1538.3px;top:351.5px;" width="12" height="14" viewBox="0 0 12 14"><rect x="0.0" y="0.0" width="4.9" height="2.5" fill="#5b8fad"/><rect x="6.7" y="0.0" width="4.9" height="2.5" fill="#5b8fad"/><rect x="0.0" y="3.55" width="4.9" height="2.5" fill="#5b8fad"/><rect x="6.7" y="3.55" width="4.9" height="2.5" fill="#5b8fad"/><rect x="0.0" y="7.1" width="4.9" height="2.5" fill="#5b8fad"/><rect x="6.7" y="7.1" width="4.9" height="2.5" fill="#5b8fad"/><rect x="0.0" y="10.649999999999999" width="4.9" height="2.5" fill="#5b8fad"/><rect x="6.7" y="10.649999999999999" width="4.9" height="2.5" fill="#5b8fad"/></svg>
<div style="left:648px;top:387px;width:914px;height:21px;background:#f0f0f0;border-top:1px solid #8fa9c4;border-bottom:1px solid #8fa9c4;"></div>
<div style="left:648px;top:388px;width:239px;height:19px;background:#fff;"></div>
<div style="left:887px;top:387px;width:1px;height:21px;background:#8fa9c4;"></div>
<div style="left:1557px;top:387px;width:1px;height:21px;background:#8fa9c4;"></div>
<span style="left:651.5px;top:390.00px;font-size:11px;line-height:15px;letter-spacing:-0.120px;color:#000;transform:scaleX(0.9639);transform-origin:left center;">Tipologia codice</span>
<span style="left:893.5px;top:390.00px;font-size:11px;line-height:15px;letter-spacing:-0.120px;color:#000;transform:scaleX(0.9510);transform-origin:left center;">Codice</span>
<div style="left:888px;top:408px;width:669px;height:24px;background:#bfdbf7;"></div>
<div style="left:648px;top:432px;width:909px;height:1px;background:#d6d6d6;"></div>
<div style="left:648px;top:446px;width:914px;height:18px;background:#f0f0f0;"></div>
<div style="left:648px;top:446px;width:58px;height:18px;background:#fff;"></div>
<svg style="left:651px;top:451px;" width="10" height="9" viewBox="0 0 10 9"><path d="M0.6 0.3V8.3" stroke="#8d9199" stroke-width="1.2"/><path d="M5.4 0.3V8.3L1.2 4.3ZM9.6 0.3V8.3L5.4 4.3Z" fill="#8d9199"/></svg>
<span style="left:669.5px;top:448.00px;font-size:11px;line-height:15px;letter-spacing:-0.148px;color:#000;">1/1</span>
<svg style="left:693.5px;top:451px;" width="10" height="9" viewBox="0 0 10 9"><path d="M9.2 0.3V8.3" stroke="#8d9199" stroke-width="1.2"/><path d="M4.4 0.3V8.3L8.6 4.3ZM0.2 0.3V8.3L4.4 4.3Z" fill="#8d9199"/></svg>
<svg style="left:711px;top:450px;" width="6" height="10" viewBox="0 0 6 10"><path d="M5.6 0.2V9.4L0.2 4.8Z" fill="#b5bac4"/></svg>
<svg style="left:1550px;top:450px;" width="6" height="10" viewBox="0 0 6 10"><path d="M0.4 0.2V9.4L5.8 4.8Z" fill="#b5bac4"/></svg>
<div style="left:647px;top:464.5px;width:916px;height:1.5px;background:#1d6183;"></div>
<span style="left:652.5px;top:469.20px;font-size:11px;line-height:15px;letter-spacing:-0.120px;color:#2d7097;transform:scaleX(0.9506);transform-origin:left center;">DATI GESTIONALI AGGIUNTIVI</span>
<div style="left:647px;top:484.5px;width:916px;height:1.3px;background:#1d6183;"></div>
<div style="left:648px;top:485.5px;width:914px;height:26px;border-bottom:1px solid #4d4d4d;border-right:1px solid #4d4d4d;"></div>
<svg style="left:657px;top:491.0px;" width="15" height="16" viewBox="0 0 15 16"><rect x="0.8" y="0.7" width="13.4" height="13.7" rx="2.7" stroke="#6f9bb5" stroke-width="1.35" fill="#f6fbfe"/><path d="M3.2 4.0H4.8" stroke="#a8c5d7" stroke-width="1.5" fill="none"/><path d="M6 4.0H11.7" stroke="#6f9cb7" stroke-width="1.5" fill="none"/><path d="M3.2 6.5H4.8" stroke="#a8c5d7" stroke-width="1.1" fill="none"/><path d="M6 6.5H11.7" stroke="#6f9cb7" stroke-width="1.1" fill="none"/><path d="M3.2 8.6H4.8" stroke="#a8c5d7" stroke-width="1.1" fill="none"/><path d="M6 8.6H11.7" stroke="#6f9cb7" stroke-width="1.1" fill="none"/><path d="M3.2 10.8H4.8" stroke="#a8c5d7" stroke-width="1.5" fill="none"/><path d="M6 10.8H11.7" stroke="#6f9cb7" stroke-width="1.5" fill="none"/></svg>
<span style="left:677.3px;top:491.00px;font-size:12px;line-height:16px;letter-spacing:-0.021px;color:#000;">Funzioni griglia</span>
<svg style="left:772px;top:491.0px;" width="16" height="16" viewBox="0 0 16 16"><path d="M12.3 5.5Q14 4.5 14 2.7V1.9Q14 0.6 12.7 0.6H2Q0.7 0.6 0.7 1.9V2.7Q0.7 3.6 1.5 4.3L5.8 8.3V11.6Q5.8 12.3 6.4 12.7L9.4 14.4V13.3" stroke="#5a88a4" stroke-width="1.3" fill="none" stroke-linejoin="round" stroke-linecap="round"/><path d="M7 6.8H11.1M9.05 6.8V10.6" stroke="#5a88a4" stroke-width="1.6" fill="none"/></svg>
<svg style="left:1425.5px;top:491.0px;" width="16" height="15" viewBox="0 0 16 15"><path d="M7.4 0.6V10.6M2.8 6.2L7.4 10.8L12 6.2" stroke="#6f9dba" stroke-width="1.2" fill="none" stroke-linecap="round" stroke-linejoin="round"/><path d="M0.2 13.4H14.8" stroke="#6f9dba" stroke-width="1.3" fill="none"/></svg>
<span style="left:1445.7px;top:491.00px;font-size:12px;line-height:16px;letter-spacing:-0.120px;color:#000;transform:scaleX(0.9178);transform-origin:left center;">Esporta</span>
<svg style="left:1486.7px;top:496.8px;" width="6.6" height="5" viewBox="0 0 6.6 5"><path d="M0 0H5.6L2.8 3.1999999999999997Z" fill="#000"/></svg>
<svg style="left:1507px;top:491.0px;" width="16" height="16" viewBox="0 0 16 16"><path d="M0.6 0.2V14.2H15" stroke="#6f9dba" stroke-width="1.15" fill="none"/><path d="M3.2 11.2L5.6 7.2L8 9.6L11.4 2L13.4 5.2" stroke="#4f86a6" stroke-width="1.25" fill="none" stroke-linejoin="round" stroke-linecap="round"/></svg>
<svg style="left:1538.3px;top:492.0px;" width="12" height="14" viewBox="0 0 12 14"><rect x="0.0" y="0.0" width="4.9" height="2.5" fill="#5b8fad"/><rect x="6.7" y="0.0" width="4.9" height="2.5" fill="#5b8fad"/><rect x="0.0" y="3.55" width="4.9" height="2.5" fill="#5b8fad"/><rect x="6.7" y="3.55" width="4.9" height="2.5" fill="#5b8fad"/><rect x="0.0" y="7.1" width="4.9" height="2.5" fill="#5b8fad"/><rect x="6.7" y="7.1" width="4.9" height="2.5" fill="#5b8fad"/><rect x="0.0" y="10.649999999999999" width="4.9" height="2.5" fill="#5b8fad"/><rect x="6.7" y="10.649999999999999" width="4.9" height="2.5" fill="#5b8fad"/></svg>
<div style="left:648px;top:528.5px;width:914px;height:20.5px;background:#f0f0f0;border-top:1px solid #8fa9c4;border-bottom:1px solid #8fa9c4;"></div>
<div style="left:648px;top:529.5px;width:80px;height:18.5px;background:#fff;"></div>
<div style="left:728px;top:528.5px;width:1px;height:20.5px;background:#8fa9c4;"></div>
<div style="left:836px;top:528.5px;width:1px;height:20.5px;background:#8fa9c4;"></div>
<div style="left:926px;top:528.5px;width:1px;height:20.5px;background:#8fa9c4;"></div>
<div style="left:996px;top:528.5px;width:1px;height:20.5px;background:#8fa9c4;"></div>
<span style="left:652px;top:530.80px;font-size:11px;line-height:15px;letter-spacing:-0.120px;color:#000;transform:scaleX(0.9830);transform-origin:left center;">Tipologia dato</span>
<span style="left:734.7px;top:530.80px;font-size:11px;line-height:15px;letter-spacing:-0.120px;color:#000;transform:scaleX(0.9857);transform-origin:left center;">Valore alfanumerico</span>
<span style="left:842.5px;top:530.80px;font-size:11px;line-height:15px;letter-spacing:-0.120px;color:#000;transform:scaleX(0.9729);transform-origin:left center;">Valore numerico</span>
<span style="left:932.8px;top:530.80px;font-size:11px;line-height:15px;letter-spacing:-0.105px;color:#000;">Valore data</span>
<div style="left:729px;top:549px;width:268px;height:24.5px;background:#bfdbf7;"></div>
<span style="left:651.5px;top:553.50px;font-size:11px;line-height:15px;letter-spacing:-0.120px;color:#000;transform:scaleX(0.9148);transform-origin:left center;">SCONTRINO</span>
<span style="left:732.5px;top:553.50px;font-size:11px;line-height:15px;letter-spacing:-0.120px;color:#000;transform:scaleX(0.9794);transform-origin:left center;">6755</span>
<span style="right:744.54px;top:553.50px;font-size:11px;line-height:15px;letter-spacing:-0.039px;color:#000;">6755,00000000</span>
<span style="left:930.6px;top:553.50px;font-size:11px;line-height:15px;letter-spacing:0.171px;color:#000;">07/08/2024</span>
<div style="left:648px;top:598px;width:349px;height:1px;background:#d6d6d6;"></div>
<div style="left:648px;top:853px;width:914px;height:17.5px;background:#f0f0f0;"></div>
<div style="left:648px;top:853px;width:58px;height:17.5px;background:#fff;"></div>
<div style="left:690px;top:853px;width:16px;height:17.5px;background:#eaf3fb;"></div>
<svg style="left:651px;top:858px;" width="10" height="9" viewBox="0 0 10 9"><path d="M0.6 0.3V8.3" stroke="#8a8f98" stroke-width="1.2"/><path d="M5.4 0.3V8.3L1.2 4.3ZM9.6 0.3V8.3L5.4 4.3Z" fill="#8a8f98"/></svg>
<span style="left:669.5px;top:854.50px;font-size:11px;line-height:15px;letter-spacing:-0.148px;color:#000;">1/1</span>
<svg style="left:693.5px;top:858px;" width="10" height="9" viewBox="0 0 10 9"><path d="M9.2 0.3V8.3" stroke="#4a5f86" stroke-width="1.2"/><path d="M4.4 0.3V8.3L8.6 4.3ZM0.2 0.3V8.3L4.4 4.3Z" fill="#4a5f86"/></svg>
<svg style="left:711px;top:857px;" width="6" height="10" viewBox="0 0 6 10"><path d="M5.6 0.2V9.4L0.2 4.8Z" fill="#b5bac4"/></svg>
<svg style="left:1550px;top:857px;" width="6" height="10" viewBox="0 0 6 10"><path d="M0.4 0.2V9.4L5.8 4.8Z" fill="#b5bac4"/></svg>
<div style="left:646px;top:870px;width:918px;height:1.5px;background:#1d6183;"></div>
<svg style="left:360px;top:560px;" width="350" height="100" viewBox="0 0 350 100"><path d="M12 87L322.5 23.5" stroke="#de262d" stroke-width="3.5" fill="none"/><path d="M315.5 14.2L337.2 20.5L320.4 33.1Z" fill="#de262d"/></svg>
</div></body></html>
